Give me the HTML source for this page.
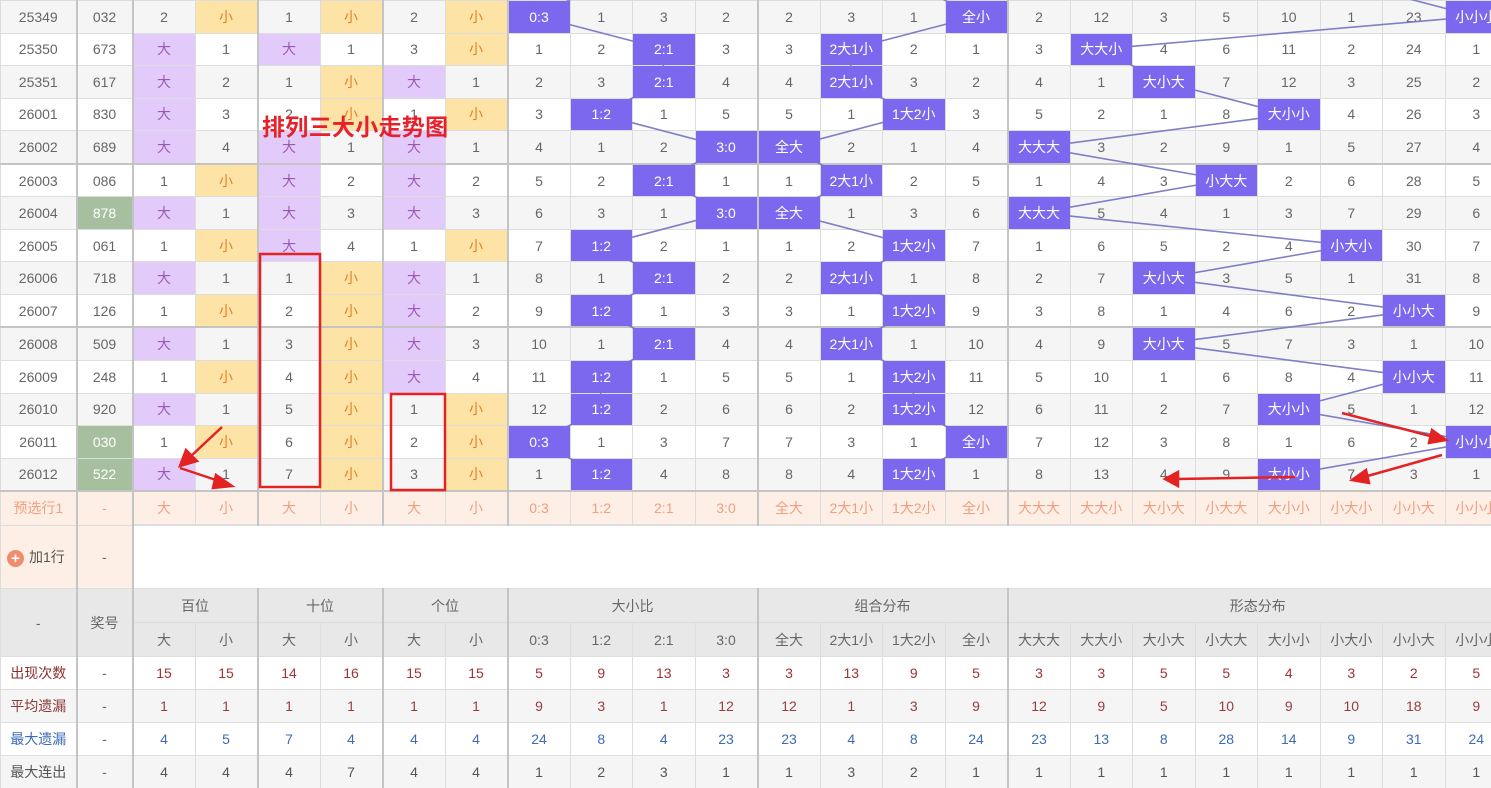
<!DOCTYPE html>
<html><head><meta charset="utf-8">
<style>
html,body{margin:0;padding:0;background:#fff;width:1491px;height:788px;overflow:hidden;position:relative}
table{border-collapse:collapse;table-layout:fixed;width:1507px;font-family:"Liberation Sans","Noto Sans CJK SC",sans-serif;font-size:14px;color:#666;position:absolute;left:0;top:0}
td{border:1px solid #ddd;text-align:center;padding:0;white-space:nowrap;overflow:hidden;position:relative}
tr.r td{height:31.56px}
tr.g td{background:#f5f5f5}
tr.w td{background:#fff}
tr.sep td{border-bottom:2px solid #c4c4c4}
td.t{border-right:2px solid #c4c4c4}
tr td.d{background:#e2cafa;color:#9b59b6}
tr td.x{background:#fde3a6;color:#e67e22}
tr td.n{background:#a6c09f;color:#fff}
td.b i{position:absolute;left:0;top:0;right:0;bottom:0;background:#7b68ee;color:#fff;font-style:normal;display:flex;align-items:center;justify-content:center;z-index:2}
tr.p td{background:#fdeee6;color:#f0a07e;height:32px}
tr.a td{height:62px}
tr.h td{background:#e8e8e8;color:#666;height:33px}
tr.s td{height:32px}
tr.v1 td{color:#a33333}tr.v2 td{color:#9a3c3c}tr.v3 td{color:#3a6cb8}tr.v4 td{color:#555}
tr.v1 td:first-child{color:#8b2f2f}tr.v2 td:first-child{color:#8b3a3a}tr.v3 td:first-child{color:#3a6cb8}tr.v4 td:first-child{color:#555}
tr.v1 td:nth-child(2),tr.v2 td:nth-child(2),tr.v3 td:nth-child(2),tr.v4 td:nth-child(2){color:#666}
svg{position:absolute;left:0;top:0;z-index:1}
svg.top{z-index:3}
.title{position:absolute;left:262px;top:108px;font-family:"Liberation Sans","Noto Sans CJK SC",sans-serif;font-weight:bold;font-size:23px;color:#e8202a;z-index:4;letter-spacing:0.3px}
.plus{display:inline-block;width:17px;height:17px;border-radius:50%;background:#f08c6c;color:#fff;font-size:15px;line-height:17px;text-align:center;vertical-align:middle;margin-right:5px;font-weight:bold}
</style></head><body>
<table>
<colgroup><col style="width:76px"><col style="width:56px">
<col style="width:62.5px"><col style="width:62.5px"><col style="width:62.5px"><col style="width:62.5px"><col style="width:62.5px"><col style="width:62.5px">
<col style="width:62.5px"><col style="width:62.5px"><col style="width:62.5px"><col style="width:62.5px">
<col style="width:62.5px"><col style="width:62.5px"><col style="width:62.5px"><col style="width:62.5px">
<col style="width:62.5px"><col style="width:62.5px"><col style="width:62.5px"><col style="width:62.5px"><col style="width:62.5px"><col style="width:62.5px"><col style="width:62.5px"><col style="width:62.5px"></colgroup>
<tr class="r g"><td class="t">25349</td><td class="t">032</td><td>2</td><td class="x t">小</td><td>1</td><td class="x t">小</td><td>2</td><td class="x t">小</td><td class="b"><i>0:3</i></td><td>1</td><td>3</td><td class="t">2</td><td>2</td><td>3</td><td>1</td><td class="b t"><i>全小</i></td><td>2</td><td>12</td><td>3</td><td>5</td><td>10</td><td>1</td><td>23</td><td class="b"><i>小小小</i></td></tr>
<tr class="r w"><td class="t">25350</td><td class="t">673</td><td class="d">大</td><td class="t">1</td><td class="d">大</td><td class="t">1</td><td>3</td><td class="x t">小</td><td>1</td><td>2</td><td class="b"><i>2:1</i></td><td class="t">3</td><td>3</td><td class="b"><i>2大1小</i></td><td>2</td><td class="t">1</td><td>3</td><td class="b"><i>大大小</i></td><td>4</td><td>6</td><td>11</td><td>2</td><td>24</td><td>1</td></tr>
<tr class="r g"><td class="t">25351</td><td class="t">617</td><td class="d">大</td><td class="t">2</td><td>1</td><td class="x t">小</td><td class="d">大</td><td class="t">1</td><td>2</td><td>3</td><td class="b"><i>2:1</i></td><td class="t">4</td><td>4</td><td class="b"><i>2大1小</i></td><td>3</td><td class="t">2</td><td>4</td><td>1</td><td class="b"><i>大小大</i></td><td>7</td><td>12</td><td>3</td><td>25</td><td>2</td></tr>
<tr class="r w"><td class="t">26001</td><td class="t">830</td><td class="d">大</td><td class="t">3</td><td>2</td><td class="x t">小</td><td>1</td><td class="x t">小</td><td>3</td><td class="b"><i>1:2</i></td><td>1</td><td class="t">5</td><td>5</td><td>1</td><td class="b"><i>1大2小</i></td><td class="t">3</td><td>5</td><td>2</td><td>1</td><td>8</td><td class="b"><i>大小小</i></td><td>4</td><td>26</td><td>3</td></tr>
<tr class="r g sep"><td class="t">26002</td><td class="t">689</td><td class="d">大</td><td class="t">4</td><td class="d">大</td><td class="t">1</td><td class="d">大</td><td class="t">1</td><td>4</td><td>1</td><td>2</td><td class="b t"><i>3:0</i></td><td class="b"><i>全大</i></td><td>2</td><td>1</td><td class="t">4</td><td class="b"><i>大大大</i></td><td>3</td><td>2</td><td>9</td><td>1</td><td>5</td><td>27</td><td>4</td></tr>
<tr class="r w"><td class="t">26003</td><td class="t">086</td><td>1</td><td class="x t">小</td><td class="d">大</td><td class="t">2</td><td class="d">大</td><td class="t">2</td><td>5</td><td>2</td><td class="b"><i>2:1</i></td><td class="t">1</td><td>1</td><td class="b"><i>2大1小</i></td><td>2</td><td class="t">5</td><td>1</td><td>4</td><td>3</td><td class="b"><i>小大大</i></td><td>2</td><td>6</td><td>28</td><td>5</td></tr>
<tr class="r g"><td class="t">26004</td><td class="n t">878</td><td class="d">大</td><td class="t">1</td><td class="d">大</td><td class="t">3</td><td class="d">大</td><td class="t">3</td><td>6</td><td>3</td><td>1</td><td class="b t"><i>3:0</i></td><td class="b"><i>全大</i></td><td>1</td><td>3</td><td class="t">6</td><td class="b"><i>大大大</i></td><td>5</td><td>4</td><td>1</td><td>3</td><td>7</td><td>29</td><td>6</td></tr>
<tr class="r w"><td class="t">26005</td><td class="t">061</td><td>1</td><td class="x t">小</td><td class="d">大</td><td class="t">4</td><td>1</td><td class="x t">小</td><td>7</td><td class="b"><i>1:2</i></td><td>2</td><td class="t">1</td><td>1</td><td>2</td><td class="b"><i>1大2小</i></td><td class="t">7</td><td>1</td><td>6</td><td>5</td><td>2</td><td>4</td><td class="b"><i>小大小</i></td><td>30</td><td>7</td></tr>
<tr class="r g"><td class="t">26006</td><td class="t">718</td><td class="d">大</td><td class="t">1</td><td>1</td><td class="x t">小</td><td class="d">大</td><td class="t">1</td><td>8</td><td>1</td><td class="b"><i>2:1</i></td><td class="t">2</td><td>2</td><td class="b"><i>2大1小</i></td><td>1</td><td class="t">8</td><td>2</td><td>7</td><td class="b"><i>大小大</i></td><td>3</td><td>5</td><td>1</td><td>31</td><td>8</td></tr>
<tr class="r w sep"><td class="t">26007</td><td class="t">126</td><td>1</td><td class="x t">小</td><td>2</td><td class="x t">小</td><td class="d">大</td><td class="t">2</td><td>9</td><td class="b"><i>1:2</i></td><td>1</td><td class="t">3</td><td>3</td><td>1</td><td class="b"><i>1大2小</i></td><td class="t">9</td><td>3</td><td>8</td><td>1</td><td>4</td><td>6</td><td>2</td><td class="b"><i>小小大</i></td><td>9</td></tr>
<tr class="r g"><td class="t">26008</td><td class="t">509</td><td class="d">大</td><td class="t">1</td><td>3</td><td class="x t">小</td><td class="d">大</td><td class="t">3</td><td>10</td><td>1</td><td class="b"><i>2:1</i></td><td class="t">4</td><td>4</td><td class="b"><i>2大1小</i></td><td>1</td><td class="t">10</td><td>4</td><td>9</td><td class="b"><i>大小大</i></td><td>5</td><td>7</td><td>3</td><td>1</td><td>10</td></tr>
<tr class="r w"><td class="t">26009</td><td class="t">248</td><td>1</td><td class="x t">小</td><td>4</td><td class="x t">小</td><td class="d">大</td><td class="t">4</td><td>11</td><td class="b"><i>1:2</i></td><td>1</td><td class="t">5</td><td>5</td><td>1</td><td class="b"><i>1大2小</i></td><td class="t">11</td><td>5</td><td>10</td><td>1</td><td>6</td><td>8</td><td>4</td><td class="b"><i>小小大</i></td><td>11</td></tr>
<tr class="r g"><td class="t">26010</td><td class="t">920</td><td class="d">大</td><td class="t">1</td><td>5</td><td class="x t">小</td><td>1</td><td class="x t">小</td><td>12</td><td class="b"><i>1:2</i></td><td>2</td><td class="t">6</td><td>6</td><td>2</td><td class="b"><i>1大2小</i></td><td class="t">12</td><td>6</td><td>11</td><td>2</td><td>7</td><td class="b"><i>大小小</i></td><td>5</td><td>1</td><td>12</td></tr>
<tr class="r w"><td class="t">26011</td><td class="n t">030</td><td>1</td><td class="x t">小</td><td>6</td><td class="x t">小</td><td>2</td><td class="x t">小</td><td class="b"><i>0:3</i></td><td>1</td><td>3</td><td class="t">7</td><td>7</td><td>3</td><td>1</td><td class="b t"><i>全小</i></td><td>7</td><td>12</td><td>3</td><td>8</td><td>1</td><td>6</td><td>2</td><td class="b"><i>小小小</i></td></tr>
<tr class="r g sep"><td class="t">26012</td><td class="n t">522</td><td class="d">大</td><td class="t">1</td><td>7</td><td class="x t">小</td><td>3</td><td class="x t">小</td><td>1</td><td class="b"><i>1:2</i></td><td>4</td><td class="t">8</td><td>8</td><td>4</td><td class="b"><i>1大2小</i></td><td class="t">1</td><td>8</td><td>13</td><td>4</td><td>9</td><td class="b"><i>大小小</i></td><td>7</td><td>3</td><td>1</td></tr>
<tr class="p"><td class="t">预选行1</td><td class="t">-</td><td>大</td><td class="t">小</td><td>大</td><td class="t">小</td><td>大</td><td class="t">小</td><td>0:3</td><td>1:2</td><td>2:1</td><td class="t">3:0</td><td>全大</td><td>2大1小</td><td>1大2小</td><td class="t">全小</td><td>大大大</td><td>大大小</td><td>大小大</td><td>小大大</td><td>大小小</td><td>小大小</td><td>小小大</td><td>小小小</td></tr>
<tr class="a"><td class="t" style="background:#fdeee6;color:#555;text-align:left;padding-left:6px"><span class="plus">+</span>加1行</td><td class="t" style="background:#fdeee6">-</td><td colspan="22" style="background:#fff;border-top:2px solid #ddd"></td></tr>
<tr class="h"><td rowspan="2" class="t">-</td><td rowspan="2" class="t">奖号</td><td colspan="2" class="t">百位</td><td colspan="2" class="t">十位</td><td colspan="2" class="t">个位</td><td colspan="4" class="t">大小比</td><td colspan="4" class="t">组合分布</td><td colspan="8">形态分布</td></tr>
<tr class="h"><td>大</td><td class="t">小</td><td>大</td><td class="t">小</td><td>大</td><td class="t">小</td><td>0:3</td><td>1:2</td><td>2:1</td><td class="t">3:0</td><td>全大</td><td>2大1小</td><td>1大2小</td><td class="t">全小</td><td>大大大</td><td>大大小</td><td>大小大</td><td>小大大</td><td>大小小</td><td>小大小</td><td>小小大</td><td>小小小</td></tr>
<tr class="s w v1"><td class="t">出现次数</td><td class="t">-</td><td>15</td><td class="t">15</td><td>14</td><td class="t">16</td><td>15</td><td class="t">15</td><td>5</td><td>9</td><td>13</td><td class="t">3</td><td>3</td><td>13</td><td>9</td><td class="t">5</td><td>3</td><td>3</td><td>5</td><td>5</td><td>4</td><td>3</td><td>2</td><td>5</td></tr>
<tr class="s g v2"><td class="t">平均遗漏</td><td class="t">-</td><td>1</td><td class="t">1</td><td>1</td><td class="t">1</td><td>1</td><td class="t">1</td><td>9</td><td>3</td><td>1</td><td class="t">12</td><td>12</td><td>1</td><td>3</td><td class="t">9</td><td>12</td><td>9</td><td>5</td><td>10</td><td>9</td><td>10</td><td>18</td><td>9</td></tr>
<tr class="s w v3"><td class="t">最大遗漏</td><td class="t">-</td><td>4</td><td class="t">5</td><td>7</td><td class="t">4</td><td>4</td><td class="t">4</td><td>24</td><td>8</td><td>4</td><td class="t">23</td><td>23</td><td>4</td><td>8</td><td class="t">24</td><td>23</td><td>13</td><td>8</td><td>28</td><td>14</td><td>9</td><td>31</td><td>24</td></tr>
<tr class="s g v4"><td class="t">最大连出</td><td class="t">-</td><td>4</td><td class="t">4</td><td>4</td><td class="t">7</td><td>4</td><td class="t">4</td><td>1</td><td>2</td><td>3</td><td class="t">1</td><td>1</td><td>3</td><td>2</td><td class="t">1</td><td>1</td><td>1</td><td>1</td><td>1</td><td>1</td><td>1</td><td>1</td><td>1</td></tr>
</table>
<svg width="1491" height="788">
<g fill="none" stroke="#7f7fc8" stroke-width="1.6">
<polyline points="600.75,-16.4 538.25,16.4 663.25,49.1 663.25,81.8 600.75,114.5 725.75,147.3 663.25,180 725.75,212.7 600.75,245.5 663.25,278.2 600.75,310.9 663.25,343.7 600.75,376.4 600.75,409.1 538.25,441.8 600.75,474.6"/>
<polyline points="913.25,-16.4 975.75,16.4 850.75,49.1 850.75,81.8 913.25,114.5 788.25,147.3 850.75,180 788.25,212.7 913.25,245.5 850.75,278.2 913.25,310.9 850.75,343.7 913.25,376.4 913.25,409.1 975.75,441.8 913.25,474.6"/>
<polyline points="1350.75,-16.4 1475.75,16.4 1100.75,49.1 1163.25,81.8 1288.25,114.5 1038.25,147.3 1225.75,180 1038.25,212.7 1350.75,245.5 1163.25,278.2 1413.25,310.9 1163.25,343.7 1413.25,376.4 1288.25,409.1 1475.75,441.8 1288.25,474.6"/>
</g>
</svg>
<svg class="top" width="1491" height="788">
<g fill="none" stroke="#e52222" stroke-width="2.5">
<rect x="260" y="254" width="60" height="233"/>
<rect x="391" y="394" width="54" height="96"/>
</g>
<g stroke="#e52222" stroke-width="2.5" fill="#e52222">
<line x1="222" y1="427" x2="190" y2="457"/><polygon points="180,466 186,450 197,461"/>
<line x1="180" y1="468" x2="222" y2="482"/><polygon points="232,486 216,475 213,488"/>
<line x1="1342" y1="413" x2="1434" y2="437"/><polygon points="1446,440 1432,430 1429,443"/>
<line x1="1442" y1="455" x2="1364" y2="477"/><polygon points="1352,480 1366,470 1369,483"/>
<line x1="1295" y1="477" x2="1177" y2="479"/><polygon points="1165,479 1178,472 1178,486"/>
</g>
</svg>
<div class="title">排列三大小走势图</div>
</body></html>
